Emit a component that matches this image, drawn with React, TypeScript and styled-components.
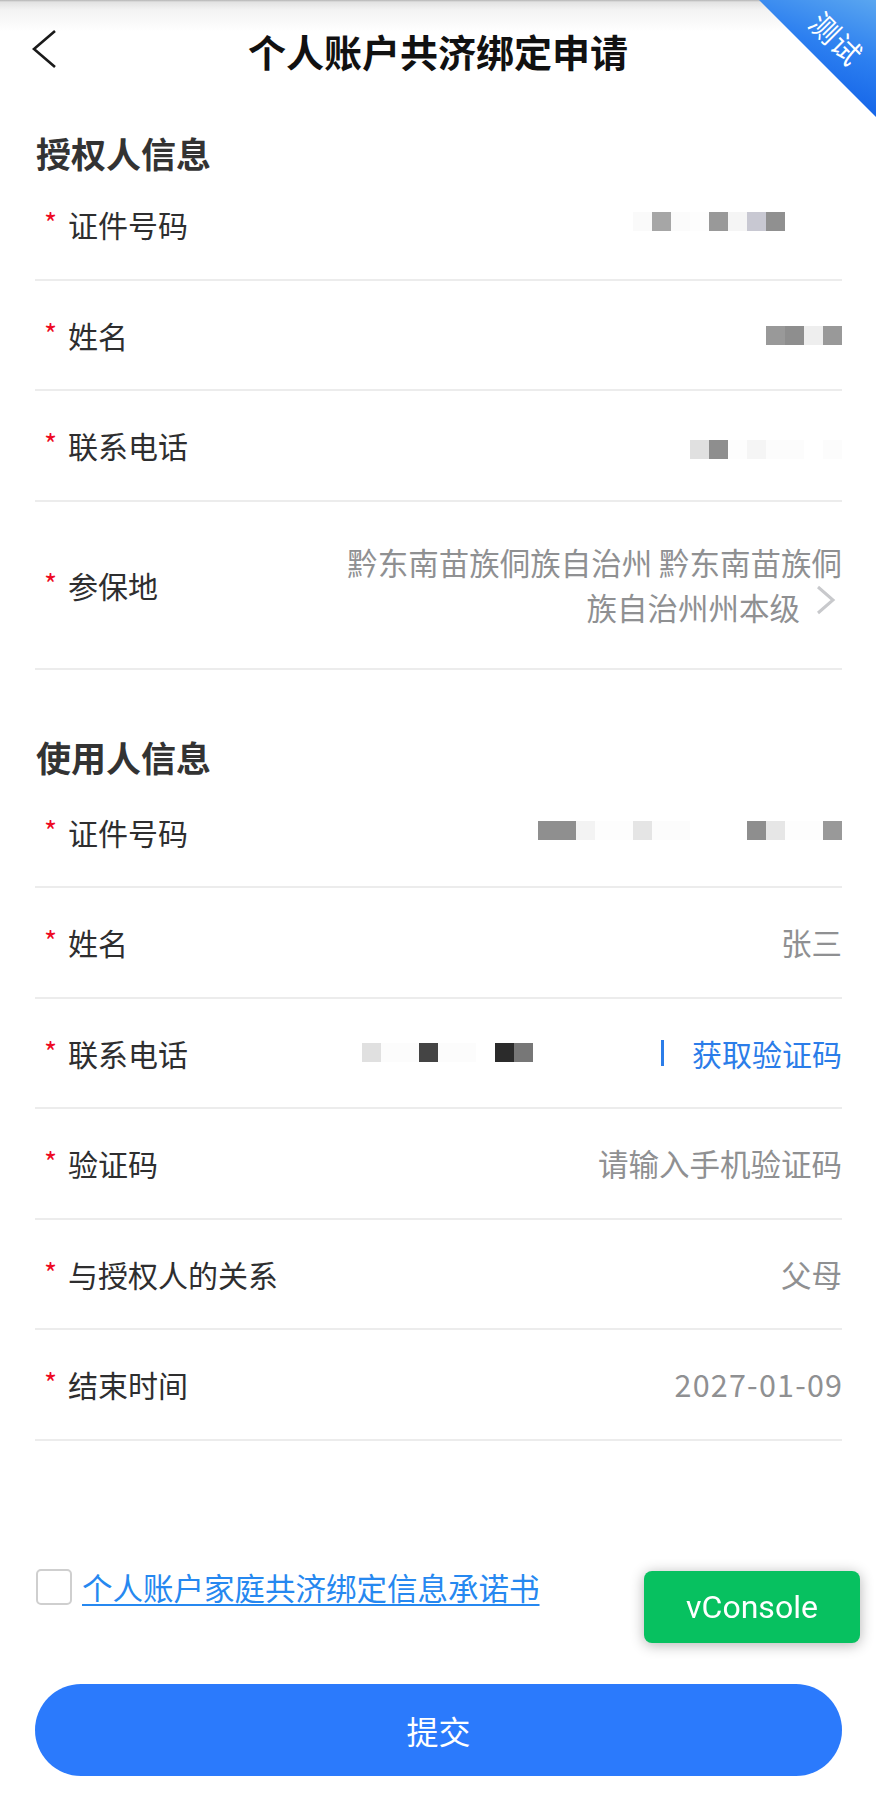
import React from "react";
import styled, { createGlobalStyle } from "styled-components";

const GlobalStyle = createGlobalStyle`
  *, *::before, *::after { box-sizing: border-box; }
  html, body { margin: 0; padding: 0; background: #ffffff; }
  body {
    font-family: "Noto Sans CJK SC", "Noto Sans", sans-serif;
    color: #323233;
  }
`;

const Page = styled.div`
  position: relative;
  width: 876px;
  padding-bottom: 30px;
`;

const NavBar = styled.header`
  height: 102px;
  display: grid;
  grid-template-columns: 110px 1fr 110px;
  align-items: center;
  background: linear-gradient(#b3b3b3 0px, #e2e2e2 2px, #f3f3f3 10px, #ffffff 32px);
`;

const BackButton = styled.button`
  display: flex;
  align-items: center;
  height: 44px;
  padding: 0 0 0 32px;
  margin-top: -4px;
  border: none;
  background: transparent;
  cursor: pointer;
`;

const NavTitle = styled.h1`
  margin: 0;
  text-align: center;
  font-size: 38px;
  font-weight: 700;
  line-height: 1;
  color: #111111;
  white-space: nowrap;
`;

const Ribbon = styled.div`
  position: absolute;
  top: 0;
  right: 0;
  width: 117px;
  height: 117px;
  clip-path: polygon(0 0, 100% 0, 100% 100%);
  background: linear-gradient(200deg, #5aa6f0 0%, #2c7ff0 40%, #0452e3 100%);
`;

const RibbonText = styled.span`
  position: absolute;
  left: 78px;
  top: 38px;
  transform: translate(-50%, -50%) rotate(45deg);
  font-size: 29px;
  line-height: 1;
  letter-spacing: 1px;
  color: #ffffff;
  white-space: nowrap;
`;

const Content = styled.main`
  padding: 0 34px 0 35px;
`;

const Section = styled.section<{ $top: number; $bottom: number }>`
  padding-top: ${(p) => p.$top}px;
  & > h2 {
    margin-bottom: ${(p) => p.$bottom}px;
  }
`;

const SectionTitle = styled.h2`
  margin: 0;
  padding-left: 1px;
  font-size: 35px;
  font-weight: 700;
  line-height: 34px;
  color: #333333;
`;

const Row = styled.div`
  display: flex;
  align-items: center;
  min-height: 110.5px;
  padding: 38px 0;
  border-bottom: 2px solid #ececec;
`;

const Label = styled.div`
  flex: none;
  width: 300px;
  padding-left: 9px;
  display: flex;
  align-items: center;
  font-size: 30px;
  line-height: 32px;
  color: #2e2e2f;
  white-space: nowrap;
`;

const Required = styled.span`
  display: inline-block;
  width: 24px;
  color: #ee0a24;
  font-size: 28px;
  line-height: 32px;
  transform: translateY(-2px);
`;

const Value = styled.div`
  flex: 1;
  min-width: 0;
  text-align: right;
  font-size: 30.5px;
  line-height: 32px;
  color: #8f9092;
`;

const DateValue = styled(Value)`
  letter-spacing: 1.2px;
  margin-right: -1.2px;
`;

const AddressValue = styled(Value)`
  line-height: 45px;
`;

const Chevron = styled.svg`
  display: inline-block;
  vertical-align: top;
  width: 42px;
  height: 30px;
`;

const MosaicWrap = styled.span<{ $lift: number }>`
  display: inline-flex;
  vertical-align: middle;
  transform: translateY(${(p) => -p.$lift}px);
`;

const Cell = styled.span<{ $c: string }>`
  display: block;
  width: 19px;
  height: 19px;
  background: ${(p) => p.$c || "transparent"};
`;

const PhoneValue = styled.div`
  flex: 1;
  min-width: 0;
  display: flex;
  align-items: center;
  padding-left: 27px;
`;

const Spacer = styled.span`
  flex: 1;
`;

const SendCode = styled.button`
  display: flex;
  align-items: center;
  padding: 0;
  border: none;
  background: transparent;
  font-family: inherit;
  font-size: 30px;
  line-height: 32px;
  color: #2b7de9;
  cursor: pointer;
`;

const Divider = styled.span`
  display: block;
  width: 3px;
  height: 26px;
  margin-right: 28px;
  background: #2b7de9;
`;

const Agreement = styled.div`
  display: flex;
  align-items: center;
  gap: 10px;
  margin-top: 128px;
  padding-left: 1px;
`;

const CheckBox = styled.span`
  flex: none;
  width: 36px;
  height: 36px;
  border: 2px solid #cfcfcf;
  border-radius: 5px;
  background: #ffffff;
`;

const AgreementLink = styled.a`
  font-size: 30.5px;
  line-height: 36px;
  color: #2688f0;
  text-decoration: underline;
  text-underline-offset: 4px;
  text-decoration-thickness: 2px;
  cursor: pointer;
`;

const SubmitButton = styled.button`
  display: block;
  width: 100%;
  height: 92px;
  margin-top: 79px;
  border: none;
  border-radius: 46px;
  background: #2b7afc;
  color: #ffffff;
  font-family: inherit;
  font-size: 32px;
  cursor: pointer;
`;

const VConsole = styled.div`
  position: fixed;
  right: 16px;
  bottom: 174px;
  width: 216px;
  height: 72px;
  display: flex;
  align-items: center;
  justify-content: center;
  border-radius: 8px;
  background: #07c160;
  box-shadow: 0 2px 14px rgba(0, 0, 0, 0.3);
  font-family: Roboto, "Noto Sans", sans-serif;
  font-size: 32px;
  color: #ffffff;
`;

const Mosaic = ({ cells, lift = 0 }: { cells: string[]; lift?: number }) => (
  <MosaicWrap $lift={lift}>
    {cells.map((c, i) => (
      <Cell key={i} $c={c} />
    ))}
  </MosaicWrap>
);

const Field = ({ label, children }: { label: string; children: React.ReactNode }) => (
  <Row>
    <Label>
      <Required>*</Required>
      {label}
    </Label>
    {children}
  </Row>
);

export default function App() {
  return (
    <Page>
      <GlobalStyle />
      <NavBar>
        <BackButton aria-label="返回">
          <svg width="26" height="40" viewBox="0 0 26 40">
            <polyline points="23,2 2,20 23,38" fill="none" stroke="#1a1a1a" strokeWidth="2.6" strokeLinejoin="miter" />
          </svg>
        </BackButton>
        <NavTitle>个人账户共济绑定申请</NavTitle>
        <span />
      </NavBar>
      <Ribbon>
        <RibbonText>测试</RibbonText>
      </Ribbon>

      <Content>
        <Section $top={34} $bottom={0}>
          <SectionTitle>授权人信息</SectionTitle>
          <Field label="证件号码">
            <Value>
              <Mosaic
                lift={7}
                cells={["#fafafa", "#a6a6a6", "#fbfbfb", "#fdfdfd", "#999999", "#f5f5f5", "#c8c8d2", "#909090", "", "", ""]}
              />
            </Value>
          </Field>
          <Field label="姓名">
            <Value>
              <Mosaic lift={4} cells={["#999999", "#8e8e8e", "#eeeeee", "#999999"]} />
            </Value>
          </Field>
          <Field label="联系电话">
            <Value>
              <Mosaic cells={["#e0e0e0", "#8e8e8e", "#fdfdfd", "#f5f5f5", "#fcfcfc", "#fcfcfc", "", "#fcfcfc"]} />
            </Value>
          </Field>
          <Field label="参保地">
            <AddressValue>
              黔东南苗族侗族自治州 黔东南苗族侗族自治州州本级
              <Chevron viewBox="0 0 42 30">
                <polyline points="18,2 33,15 18,28" fill="none" stroke="#c8c9cc" strokeWidth="3" />
              </Chevron>
            </AddressValue>
          </Field>
        </Section>

        <Section $top={70} $bottom={4}>
          <SectionTitle>使用人信息</SectionTitle>
          <Field label="证件号码">
            <Value>
              <Mosaic
                lift={6}
                cells={[
                  "#8f8f8f", "#8f8f8f", "#f3f3f3", "#fdfdfd", "#fdfdfd", "#e5e5e5", "#fcfcfc", "#fcfcfc",
                  "", "", "", "#8e8e8e", "#e6e6e6", "#fdfdfd", "#fdfdfd", "#999999",
                ]}
              />
            </Value>
          </Field>
          <Field label="姓名">
            <Value>张三</Value>
          </Field>
          <Field label="联系电话">
            <PhoneValue>
              <Mosaic cells={["#e0e0e0", "#fcfcfc", "#fcfcfc", "#444444", "#fcfcfc", "#fcfcfc", "", "#2b2b2b", "#777777"]} />
              <Spacer />
              <SendCode>
                <Divider />
                获取验证码
              </SendCode>
            </PhoneValue>
          </Field>
          <Field label="验证码">
            <Value>请输入手机验证码</Value>
          </Field>
          <Field label="与授权人的关系">
            <Value>父母</Value>
          </Field>
          <Field label="结束时间">
            <DateValue>2027-01-09</DateValue>
          </Field>
        </Section>

        <Agreement>
          <CheckBox />
          <AgreementLink>个人账户家庭共济绑定信息承诺书</AgreementLink>
        </Agreement>

        <SubmitButton>提交</SubmitButton>
      </Content>

      <VConsole>vConsole</VConsole>
    </Page>
  );
}
